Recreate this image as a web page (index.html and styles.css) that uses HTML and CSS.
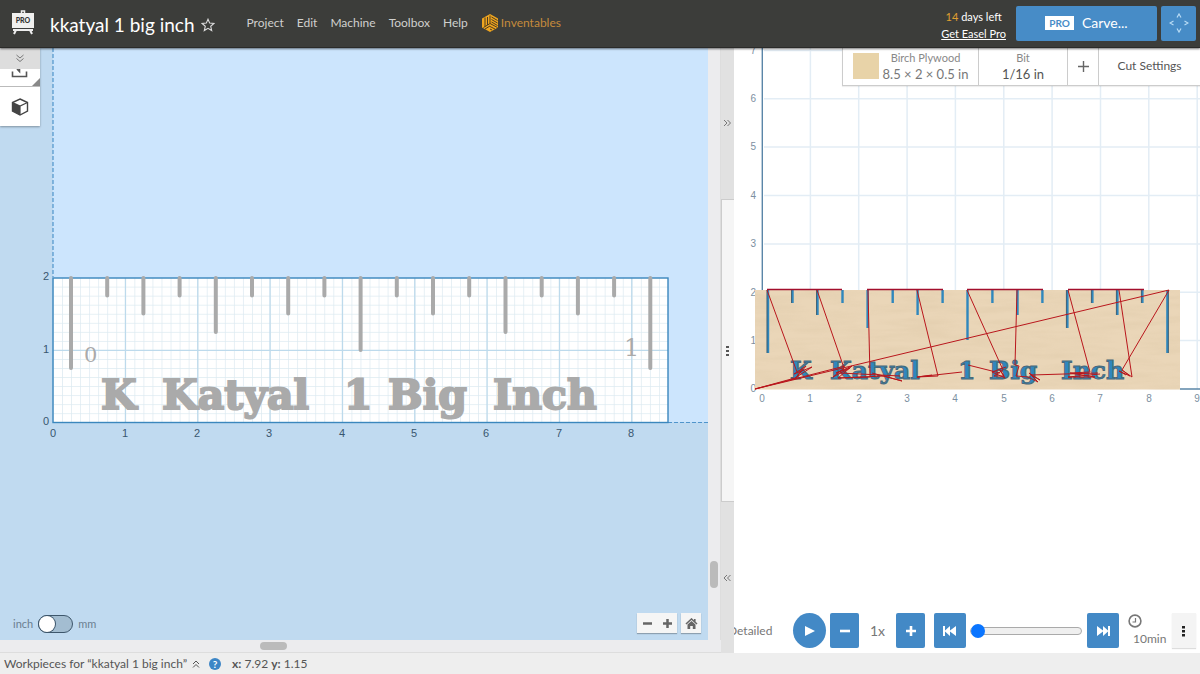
FILE: index.html
```html
<!DOCTYPE html>
<html lang="en">
<head>
<meta charset="utf-8">
<title>kkatyal 1 big inch</title>
<link rel="stylesheet" href="styles.css">
</head>
<body>
<header class="topbar">
  <a class="logo" href="#" aria-label="Easel Pro home">
    <svg width="24" height="26" viewBox="0 0 24 26" aria-hidden="true">
      <path d="M10.500 3V1h3v2" stroke="#eee" stroke-width="1.500" fill="none"/>
      <rect x="1" y="3" width="22" height="15" fill="#f0f0ee"/>
      <path d="M2 20h20M5 20l-2 4M19 20l2 4" stroke="#eee" stroke-width="2" fill="none"/>
      <text class="logo-text" x="12" y="13" text-anchor="middle">PRO</text>
    </svg>
  </a>
  <h1 class="title">kkatyal 1 big inch</h1>
  <button class="star" aria-label="Favorite">
    <svg width="14" height="14" viewBox="0 0 14 14"><path d="M7 1.200l1.700 3.900 4.200.4-3.200 2.800 1 4.200L7 10.300l-3.700 2.200 1-4.200L1.100 5.500l4.200-.4z" fill="none" stroke="#ddd" stroke-width="1.100"/></svg>
  </button>
  <nav class="menu">
    <a href="#">Project</a><a href="#">Edit</a><a href="#">Machine</a><a href="#">Toolbox</a><a href="#">Help</a>
    <a class="brand" href="#"><svg width="18" height="18" viewBox="0 0 18 18" aria-hidden="true"><path d="M9 0l8 4.500v9L9 18l-8-4.500v-9z" fill="#efa51f"/><path d="M4 3.500v9M6.500 3v8M9 1.500v8M9 9.500l-6.500 4M9 12l-5 3M10.500 3l6 3.500M10.500 5.500l6 3.500M9 9.500l7.500 4M10.500 8l6 3.500M9 12.500l5 2.500M9 15l2 1" stroke="#4d3c20" stroke-width="1" fill="none"/></svg>Inventables</a>
  </nav>
  <div class="trial"><span><b>14</b> days left</span><a href="#">Get Easel Pro</a></div>
  <button class="blue carve"><span class="pro">PRO</span>Carve...</button>
  <button class="blue jog" aria-label="Jog machine">
    <svg width="20" height="20" viewBox="0 0 20 20"><path d="M8 4.500L10 1l2 3.500M8 15.500l2 3.500 2-3.500M4.500 8L1 10l3.500 2M15.500 8l3.500 2-3.500 2" fill="none" stroke="#b9dcf5" stroke-width="1.200"/></svg>
  </button>
</header>

<main class="panes">
  <section class="design">
    <svg class="canvas" role="img" aria-label="Design canvas">
      <defs>
        <pattern id="minor" x="53" y="277.600" width="9.044" height="9.044" patternUnits="userSpaceOnUse"><path d="M0 0H9.044M0 0V9.044" stroke="#dceaf1" stroke-width="1.400" fill="none"/></pattern>
      </defs>
      <g transform="translate(0 -48)">
        <rect x="53" y="0" width="4000" height="422" fill="#cce5fd"/>
        <path d="M53 48V277M668 422.500H4000" stroke="#4f94cb" stroke-width="1.200" stroke-dasharray="4 2" fill="none"/>
        <rect x="53" y="278" width="615" height="144.500" fill="#fff"/>
        <rect x="53" y="278" width="615" height="144.500" fill="url(#minor)"/>
        <path d="M125.400 278v144M197.700 278v144M270 278v144M342.400 278v144M414.700 278v144M487 278v144M559.400 278v144M631.700 278v144M53 350.300h615" stroke="#bddaec" stroke-width="1.200" fill="none"/>
        <rect x="53" y="278" width="615" height="144.500" fill="none" stroke="#3b87bd" stroke-width="1.400"/>
        <path class="ruler" d="M71 278V368M107.200 278V295.500M143.400 278V313.500M179.600 278V295.500M215.800 278V332M252 278V295.500M288.200 278V313.500M324.400 278V295.500M360.600 278V350M396.800 278V295.500M433 278V313.500M469.200 278V295.500M505.500 278V332M541.700 278V295.500M577.900 278V313.500M614.100 278V295.500M650.300 278V368"/>
        <text class="digit-zero" x="84" y="362">0</text>
        <text class="digit-one" x="624" y="356">1</text>
        <text class="slab" y="409"><tspan x="101">K </tspan><tspan x="162">Katyal </tspan><tspan x="344">1 </tspan><tspan x="388">Big </tspan><tspan x="493">Inch</tspan></text>
        <g class="scale" text-anchor="end"><text x="49" y="280">2</text><text x="49" y="353">1</text><text x="49" y="425">0</text></g>
        <g class="scale" text-anchor="middle"><text x="53" y="437">0</text><text x="125" y="437">1</text><text x="197" y="437">2</text><text x="269" y="437">3</text><text x="342" y="437">4</text><text x="414" y="437">5</text><text x="486" y="437">6</text><text x="559" y="437">7</text><text x="631" y="437">8</text></g>
      </g>
    </svg>
    <div class="tools">
      <button class="collapse" aria-label="Collapse tools"><svg width="10" height="9" viewBox="0 0 10 9"><path d="M1.500 1L5 4l3.500-3M1.500 4.500l3.500 3 3.500-3" fill="none" stroke="#777"/></svg></button>
      <button class="tool import" aria-label="Import"><svg width="18" height="9" viewBox="0 0 18 9"><path d="M1.500 2.500v5h14v-5M6 0l2.500 2.500V0" fill="none" stroke="#555" stroke-width="1.600"/></svg></button>
      <button class="tool" aria-label="3D shapes"><svg width="18" height="18" viewBox="0 0 18 18"><path d="M9 1l7.500 3.500v8.500L9 17l-7.500-4V4.500z" fill="#fff" stroke="#444" stroke-width="1.400"/><path d="M1.500 4.500L9 8v9l-7.500-4z" fill="#444"/><path d="M1.500 4.500L9 8l7.500-3.500M9 8v9" fill="none" stroke="#444" stroke-width="1.200"/></svg></button>
    </div>
    <div class="units"><label for="unit">inch</label><input id="unit" type="checkbox" role="switch"><label for="unit">mm</label></div>
    <div class="zoom">
      <div class="zoom-box"><button aria-label="Zoom out"><svg width="11" height="11"><path d="M1 5.500h9" stroke="#666" stroke-width="2.500"/></svg></button><button aria-label="Zoom in"><svg width="11" height="11"><path d="M1 5.500h9M5.500 1v9" stroke="#666" stroke-width="2.500"/></svg></button></div>
      <div class="zoom-box"><button aria-label="Home"><svg width="13" height="11" viewBox="0 0 13 11"><path d="M1 6l5.500-5L12 6M9.800 1v3" fill="none" stroke="#666" stroke-width="1.600"/><path d="M2.500 6.500l4-3.500 4 3.500V11H7.800V8H5.200v3H2.500z" fill="#666"/></svg></button></div>
    </div>
  </section>
  <div class="vscroll"><span></span></div>
  <div class="hscroll"><span></span></div>

  <div class="splitter">
    <button class="side" aria-label="Hide preview"><svg width="9" height="8" viewBox="0 0 9 8"><path d="M1 1l3 3-3 3M4.500 1l3 3-3 3" fill="none" stroke="#777"/></svg></button>
    <div class="grip"><svg width="4" height="12"><path d="M0 1h3v2H0zM0 5h3v2H0zM0 9h3v2H0z" fill="#555"/></svg></div>
    <button class="side" aria-label="Hide design"><svg width="9" height="8" viewBox="0 0 9 8"><path d="M4 1L1 4l3 3M7.500 1l-3 3 3 3" fill="none" stroke="#777"/></svg></button>
  </div>

  <section class="preview">
    <svg class="canvas" role="img" aria-label="Toolpath preview">
      <defs>
        <filter id="grain" x="0" y="0" width="1" height="1"><feTurbulence type="fractalNoise" baseFrequency="0.02 0.150" numOctaves="3" seed="4"/><feColorMatrix values="0 0 0 0 .62  0 0 0 0 .48  0 0 0 0 .3  .9 0 0 0 -.3"/></filter>
      </defs>
      <g transform="translate(-734 -48)">
        <path d="M810.400 48V389M858.700 48V389M907.100 48V389M955.400 48V389M1003.800 48V389M1052.100 48V389M1100.500 48V389M1148.800 48V389M1197.200 48V389M764 50.400H4000M764 98.800H4000M764 147.100H4000M764 195.500H4000M764 243.900H4000M764 292.300H4000M764 340.600H4000" stroke="#e3edf5" stroke-width="1.500" fill="none"/>
        <path d="M762.300 48V290M1180 389H4000" stroke="#5b86a8" stroke-width="1.400" fill="none"/>
        <g class="scale pale" text-anchor="end"><text x="756" y="54">7</text><text x="756" y="102">6</text><text x="756" y="150">5</text><text x="756" y="199">4</text><text x="756" y="247">3</text><text x="756" y="296">2</text><text x="756" y="344">1</text><text x="756" y="392">0</text></g>
        <g class="scale pale" text-anchor="middle"><text x="762" y="402">0</text><text x="810" y="402">1</text><text x="859" y="402">2</text><text x="907" y="402">3</text><text x="955" y="402">4</text><text x="1004" y="402">5</text><text x="1052" y="402">6</text><text x="1100" y="402">7</text><text x="1149" y="402">8</text><text x="1197" y="402">9</text></g>
        <rect x="755" y="290" width="425" height="99.500" fill="#ead6b8"/>
        <rect x="755" y="290" width="425" height="99.500" filter="url(#grain)" opacity=".4"/>
        <path d="M768 290V353M792.500 290V303M817.500 290V315M842.500 290V303M867.600 290V328M892.700 290V303M917.600 290V315M942.600 290V303M967.500 290V340M992.400 290V303M1017.500 290V315M1042.400 290V303M1067.400 290V328M1092.400 290V303M1117.400 290V315M1142.400 290V303M1167.400 290V353" stroke="#2f87bd" stroke-width="2.400" fill="none"/>
        <path d="M767 290V353M791.500 290V303M816.500 290V315M1066.400 290V328M1091.400 290V303M1116.400 290V315M1141.400 290V303M1168.400 290V353" stroke="#3b5666" stroke-width=".8" fill="none"/>
        <text class="slab carved" y="379"><tspan x="790">K </tspan><tspan x="830">Katyal </tspan><tspan x="958">1 </tspan><tspan x="989">Big </tspan><tspan x="1061">Inch</tspan></text>
        <path d="M767 289.500H842M867 289.500H943M967 289.500H1043M1068 289.500H1144" stroke="#a30f2c" stroke-width="1.400" fill="none"/>
        <path class="travel" d="M755 389L1169 290L1122 370L1132 377L1119 290M755 389L795 378M767 290L797 372M755 389L845 366M795 378L812 367L794 374L806 366L796 378L802 369M817 290L844 368L833 377L850 368L836 373L852 366L838 378L870 377L868 290M838 378L884 376L902 381L872 373M840 373L900 376M917 290L938 376L917 377L962 372M917 377L932 375M967 290L1003 370L994 376L1004 376L1000 370L1005 378L992 372L1006 367M968 365L1000 373M1017 290L1015 365L1019 366L1016 376L1028 377L1038 382L1029 373L1040 380L1031 375L1098 373M1068 290L1090 372L1070 373L1095 377L1068 377L1100 374M1122 370L1130 376L1119 371L1126 375"/>
      </g>
    </svg>
    <div class="settings">
      <button class="material"><span class="swatch"></span><span class="pair"><small>Birch Plywood</small><span>8.5 × 2 × 0.5 in</span></span></button>
      <button class="bit pair"><small>Bit</small><span>1/16 in</span></button>
      <button class="add" aria-label="Add bit"><svg width="11" height="11"><path d="M0 5.500h11M5.500 0v11" stroke="#666" stroke-width="1.400"/></svg></button>
      <button class="cut">Cut Settings</button>
    </div>
    <div class="player">
      <span class="detail">Detailed</span>
      <button class="play" aria-label="Play"><svg width="12" height="12"><path d="M1 1l10 5-10 5z" fill="#fff"/></svg></button>
      <button class="sq minus" aria-label="Slower"><svg width="12" height="12"><path d="M1 6h10" stroke="#fff" stroke-width="2.600"/></svg></button>
      <span class="speed">1x</span>
      <button class="sq plus" aria-label="Faster"><svg width="12" height="12"><path d="M1 6h10M6 1v10" stroke="#fff" stroke-width="2.600"/></svg></button>
      <button class="sq wide" aria-label="To start"><svg width="14" height="12"><path d="M0 1h2v4.500L7 1v4.500L13 1v10L7 6.500V11L2 6.500V11H0z" fill="#fff"/></svg></button>
      <input class="seek" type="range" min="0" max="100" value="0" aria-label="Simulation position">
      <button class="sq wide" aria-label="To end"><svg width="14" height="12"><path d="M14 1h-2v4.500L7 1v4.500L1 1v10l6-4.500V11l5-4.500V11h2z" fill="#fff"/></svg></button>
      <span class="time"><svg width="14" height="14"><circle cx="7" cy="7" r="5.900" fill="none" stroke="#777" stroke-width="1.600"/><path d="M7.500 4v4H4.500" fill="none" stroke="#777" stroke-width="1.200"/></svg><span>10min</span></span>
      <button class="more" aria-label="More options"><svg width="4" height="12"><path d="M0 1h3v2.500H0zM0 5h3v2.500H0zM0 9h3v2.500H0z" fill="#222"/></svg></button>
    </div>
  </section>
</main>

<footer class="status">
  <button class="workpieces">Workpieces for “kkatyal 1 big inch”<svg width="8" height="9" viewBox="0 0 8 9"><path d="M1 4l3-3 3 3M1 7.500l3-3 3 3" fill="none" stroke="#555"/></svg></button>
  <a class="help" href="#" aria-label="Help">?</a>
  <span><b>x:</b> 7.92 <b>y:</b> 1.15</span>
</footer>
</body>
</html>
```
FILE: styles.css
```css
* { box-sizing: border-box; }
body {
  margin: 0;
  height: 100vh;
  display: flex;
  flex-direction: column;
  overflow: hidden;
  font: 12px/16px Lato, "Liberation Sans", sans-serif;
  color: #555;
  background: #eee;
}
button {
  font: inherit;
  color: inherit;
  border: 0;
  padding: 0;
  background: none;
  display: flex;
  align-items: center;
  justify-content: center;
}
svg { display: block; flex: none; }

.topbar {
  flex: none;
  height: 48px;
  display: flex;
  align-items: center;
  padding: 0 4px 1px 11px;
  background: #3c3d3a;
  border-bottom: 1px solid #2b2b29;
  box-shadow: 0 1px 2px #0008;
  position: relative;
  z-index: 2;
}
.logo-text { font: 900 7px Lato, sans-serif; fill: #333; }
.title { margin: 3px 6px 0 15px; font-size: 19px; line-height: 24px; font-weight: 400; color: #fff; white-space: nowrap; }
.star { margin-top: 4px; }
.menu { display: flex; gap: 13px; margin-left: 32px; flex: 1; }
.menu a { color: #d0d0ce; text-decoration: none; display: flex; align-items: center; }
.menu .brand { color: #c48b3c; gap: 2px; }
.trial {
  display: flex;
  flex-direction: column;
  align-items: center;
  font-size: 11px;
  line-height: 17px;
  color: #fff;
  margin: 4px 10px 0 0;
}
.trial b { font-weight: 400; color: #e0a030; }
.trial a { color: #fff; }
.blue { background: #478cc7; color: #fff; border-radius: 2px; height: 35px; }
.carve { width: 141px; gap: 8px; font-size: 14px; margin-right: 4px; }
.pro { background: #fff; color: #478cc7; font-size: 10px; line-height: 14px; font-weight: 700; padding: 0 4px; }
.jog { width: 35px; }

.panes {
  flex: 1;
  min-height: 0;
  display: grid;
  grid-template-columns: minmax(0, 708fr) 13px 13px minmax(0, 466fr);
  grid-template-rows: minmax(0, 1fr) 13px;
}
.design { position: relative; background: #c0daf0; overflow: hidden; }
.canvas { width: 100%; height: 100%; }
.ruler { stroke: #aaa; stroke-width: 4; stroke-linecap: round; fill: none; }
.digit-zero { font: 21px "DejaVu Serif", serif; fill: #aaa; }
.digit-one { font: 24px "DejaVu Serif", serif; fill: #aaa; }
.slab { font: 700 41px "DejaVu Serif", serif; fill: #aaa; stroke: #aaa; stroke-width: 2; }
.carved { font-size: 25px; fill: #2f87bd; stroke: #4a6878; stroke-width: 1; }
.scale { font: 11px "Liberation Sans", sans-serif; fill: #38566f; }
.pale { font-size: 10px; fill: #7c8fa1; }
.travel { stroke: #b9161c; stroke-width: 1; fill: none; }

.tools { position: absolute; left: 0; top: 0; width: 40px; background: #fff; box-shadow: 0 1px 2px #0005; }
.collapse { width: 100%; height: 21px; background: #ddd; }
.tool { width: 100%; height: 39px; }
.import { height: 18px; border-bottom: 1px solid #bbb; align-items: flex-start; position: relative; }
.import::after { content: ""; position: absolute; right: 0; bottom: 0; border: 4px solid; border-color: transparent #888 #888 transparent; }

.units { position: absolute; left: 13px; bottom: 7px; display: flex; align-items: center; gap: 5px; font-size: 11px; line-height: 18px; color: #6b7f90; }
.units input { appearance: none; margin: 0; width: 35px; height: 18px; border: 1px solid #3d566b; border-radius: 9px; background: #a3bdd1; display: flex; }
.units input::before { content: ""; width: 16px; height: 16px; border-radius: 8px; background: #fff; box-shadow: 0 0 0 1px #3d566b; }
.units input:checked::before { margin-left: auto; }
.zoom { position: absolute; right: 7px; bottom: 7px; display: flex; gap: 4px; }
.zoom-box { display: flex; background: #f5f5f5; box-shadow: 0 1px 1px #0004; }
.zoom-box button { width: 20px; height: 20px; }

.vscroll { background: #ececee; position: relative; border-right: 1px solid #ddd; display: flex; flex-direction: column; align-items: center; justify-content: flex-end; padding-bottom: 52px; }
.vscroll span { width: 8px; height: 27px; border-radius: 4px; background: #bbb; }
.hscroll { grid-row: 2; grid-column: 1 / 3; background: #ececee; border-bottom: 1px solid #ddd; display: flex; align-items: center; padding-left: 36%; }
.hscroll span { width: 27px; height: 8px; border-radius: 4px; background: #bbb; }
.splitter { grid-row: 1 / 3; grid-column: 3; display: flex; flex-direction: column; }
.side { flex: 1; background: #e1e1e1; }
.grip { flex: 2; background: #f5f5f5; border: 1px solid #ccc; border-right: 0; display: flex; align-items: center; justify-content: center; }

.preview { grid-row: 1 / 3; grid-column: 4; position: relative; background: #fff; overflow: hidden; }
.settings { position: absolute; right: 0; top: 0; height: 38px; display: flex; background: #fff; border: 1px solid #ccc; border-width: 0 0 1px 1px; box-shadow: 0 1px 1px #0001; }
.settings button { padding-bottom: 1px; }
.settings button + button { border-left: 1px solid #ccc; }
.pair { display: flex; flex-direction: column; align-items: center; justify-content: center; font-size: 13px; line-height: 17px; }
.pair small { font-size: 11px; line-height: 17px; color: #888; }
.material { width: 135px; gap: 4px; color: #777; }
.swatch { width: 26px; height: 26px; background: #e8d3a8; }
.bit { width: 89px; }
.add { width: 31px; }
.cut { width: 102px; }

.player { position: absolute; left: 0; right: 4px; bottom: 5px; display: flex; align-items: center; color: #777; }
.player button { height: 35px; flex: none; }
.detail { width: 56px; margin-left: -6px; flex: none; }
.play { width: 33px; background: #4389c6; border-radius: 50%; margin: 0 4px 0 9px; }
.sq { width: 29px; background: #4389c6; border-radius: 2px; }
.speed { width: 37px; text-align: center; font-size: 14px; }
.plus { margin-right: 9px; }
.wide { width: 32px; }
.seek { appearance: none; background: none; flex: 1; min-width: 0; margin: 0 5px 0 4px; height: 14px; }
.seek::-webkit-slider-runnable-track { height: 8px; border: 1px solid #aaa; border-radius: 4px; background: #efefef; }
.seek::-webkit-slider-thumb { appearance: none; width: 14px; height: 14px; margin-top: -4px; border-radius: 7px; background: #0a75ff; }
.time { width: 53px; padding-left: 9px; display: flex; flex-direction: column; gap: 3px; }
.time span { padding-left: 5px; line-height: 16px; }
.more { width: 24px; background: #f4f4f4; box-shadow: 0 1px 1px #0002; }

.status { flex: none; height: 21px; display: flex; align-items: center; padding: 1px 4px 0; white-space: nowrap; }
.workpieces { gap: 5px; }
.help { width: 12px; height: 12px; border-radius: 6px; margin: 0 11px 0 9px; background: #3d86c6; color: #fff; font-size: 10px; line-height: 12px; font-weight: 700; text-align: center; text-decoration: none; }
```
